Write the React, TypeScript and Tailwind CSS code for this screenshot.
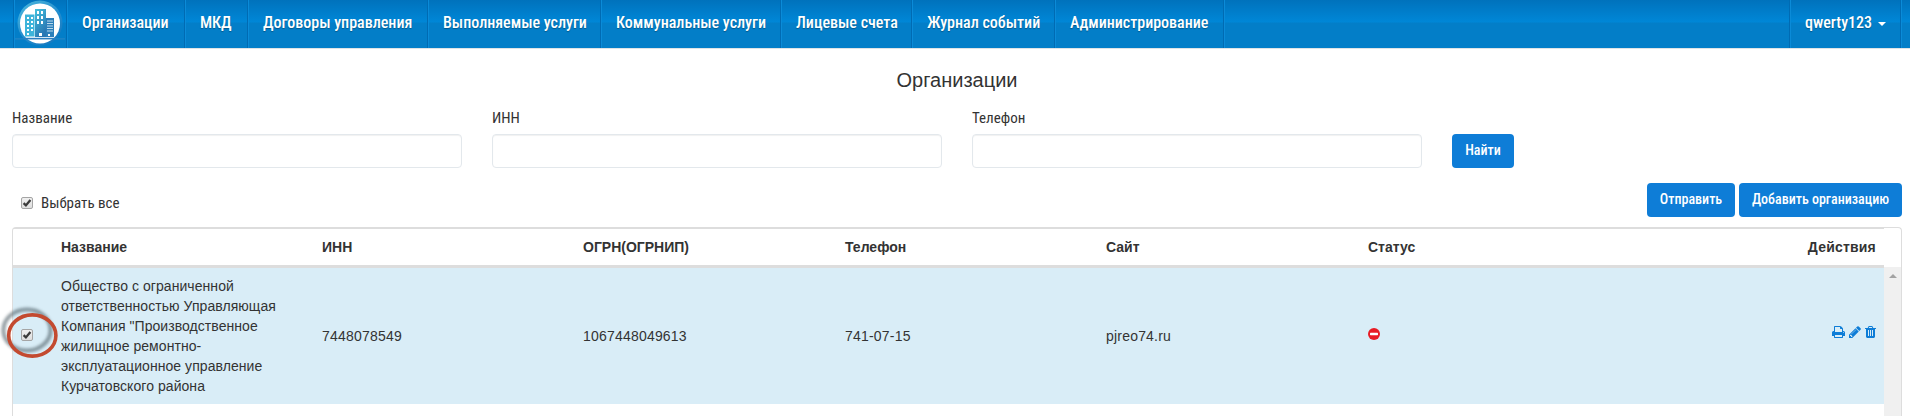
import React from "react";

const nav = [
  { label: "Организации", cls: "w-[118px]" },
  { label: "МКД", cls: "w-[63px]" },
  { label: "Договоры управления", cls: "w-[180px]" },
  { label: "Выполняемые услуги", cls: "w-[173px]" },
  { label: "Коммунальные услуги", cls: "w-[180px]" },
  { label: "Лицевые счета", cls: "w-[131px]" },
  { label: "Журнал событий", cls: "w-[143px]" },
  { label: "Администрирование", cls: "w-[169px]" },
];

const condensed = "font-['Roboto_Condensed',Roboto,sans-serif] [font-stretch:75%]";
const navItem =
  "flex h-full shrink-0 items-center whitespace-nowrap border-l border-r border-l-[#0b8bd8] border-r-[#006bb3] pl-[14px] pb-[2px]";

function Logo() {
  return (
    <svg width="50" height="48" viewBox="0 0 50 48" className="block">
      <defs>
        <linearGradient id="ring" x1="0" y1="0" x2="0.7" y2="1">
          <stop offset="0" stopColor="#5cc6e2" />
          <stop offset="0.6" stopColor="#2a90cf" />
          <stop offset="1" stopColor="#1a78bd" />
        </linearGradient>
        <linearGradient id="tower" x1="0" y1="0" x2="0.5" y2="1">
          <stop offset="0" stopColor="#45c2de" />
          <stop offset="1" stopColor="#2878b4" />
        </linearGradient>
      </defs>
      <circle cx="25" cy="23" r="22.5" fill="url(#ring)" opacity="0.85" />
      <circle cx="25" cy="23.5" r="20" fill="#fff" />
      <path d="M0 38.8 H50" stroke="#3c8ac4" strokeWidth="1.2" opacity="0.6" />
      <path d="M10 14.500h9.500v22h-9.500z" fill="#3db4da" />
      <path d="M20 9h11v28h-11z" fill="url(#tower)" />
      <path d="M31 18h8v19h-8z" fill="#2c7fba" />
      <path d="M12 17h2v2h-2zM16 17h2v2h-2zM12 21h2v2h-2zM16 21h2v2h-2zM12 25h2v2h-2zM16 25h2v2h-2zM12 29h2v2h-2zM16 29h2v2h-2zM12 33h2v2h-2zM22 11h2v3h-2zM26 11h2v3h-2zM22 16h2v3h-2zM26 16h2v3h-2zM22 21h2v3h-2zM26 21h2v3h-2zM24 33h3v3h-3zM33 34h2v2h-2z" fill="#fff" />
      <path d="M32 21h6M32 23.5h6M32 26h6M32 28.5h6M32 31h6" stroke="#c9e4f2" strokeWidth="0.9" />
      <path d="M9 38.500h32" stroke="#2a7fc0" strokeWidth="1.4" />
    </svg>
  );
}

function Check() {
  return (
    <span className="flex h-3 w-3 items-center justify-center rounded-[2px] border border-[#a5a5a5] bg-linear-to-b from-[#f0f0f0] to-[#dedede]">
      <svg width="10" height="10" viewBox="0 0 10 10">
        <path d="M1.6 5.2 L3.9 7.4 L8.4 2" fill="none" stroke="#3b3b3b" strokeWidth="2.3" />
      </svg>
    </span>
  );
}

function Button({ label, cls }: { label: string; cls: string }) {
  return (
    <button
      className={`flex h-[34px] shrink-0 items-center justify-center whitespace-nowrap rounded-[4px] bg-[#0e7dd7] pb-px text-[14px] font-medium text-white ${cls}`}
    >
      {label}
    </button>
  );
}

function Field({ label }: { label: string }) {
  return (
    <label className="flex w-[450px] flex-col text-[15px] leading-[22px]">
      <span>{label}</span>
      <input className="mt-[5px] h-[34px] w-full rounded-[4px] border border-[#e3e8ec] bg-white shadow-[inset_0_1px_1px_rgba(0,0,0,0.06)]" />
    </label>
  );
}

export default function App() {
  return (
    <div className={`flex h-[416px] w-[1910px] flex-col overflow-hidden bg-white text-[#333] ${condensed}`}>
      <nav className="flex h-[49px] shrink-0 border-b border-[#dfe3e6] bg-[linear-gradient(#0072bc_0px,#0087d7_22px,#037ec8_23px,#037ec8_48px)] text-[16px] font-medium text-white [text-shadow:0_1px_1px_rgba(0,0,0,0.3)]">
        <div className="h-full w-[14px] border-r border-[#006bb3]" />
        <div className="h-full w-[53px] border-l border-r border-l-[#0b8bd8] border-r-[#006bb3]">
          <Logo />
        </div>
        {nav.map((n) => (
          <div key={n.label} className={`${navItem} ${n.cls}`}>
            {n.label}
          </div>
        ))}
        <div className="h-full flex-1 border-l border-r border-l-[#0b8bd8] border-r-[#006bb3]" />
        <div className={`${navItem} w-[111px]`}>
          qwerty123
          <span className="ml-[6px] mt-[2px] h-0 w-0 border-x-4 border-t-4 border-x-transparent border-t-white" />
        </div>
        <div className="h-full w-[9px] border-l border-[#0b8bd8]" />
      </nav>

      <h1 className="mt-[19px] h-[24px] pl-[4px] text-center font-['Liberation_Sans',Arial,sans-serif] text-[20px] leading-[24px]">
        Организации
      </h1>

      <div className="mt-[15px] flex h-[61px] items-end gap-[30px] pl-3">
        <Field label="Название" />
        <Field label="ИНН" />
        <Field label="Телефон" />
        <Button label="Найти" cls="w-[62px]" />
      </div>

      <div className="mt-[15px] flex h-[34px] items-center justify-between pl-[21px] pr-[8px]">
        <div className="flex items-center gap-2 pt-[6px] text-[15px] leading-[20px]">
          <Check />
          <span>Выбрать все</span>
        </div>
        <div className="flex gap-1">
          <Button label="Отправить" cls="w-[88px]" />
          <Button label="Добавить организацию" cls="w-[163px]" />
        </div>
      </div>

      <section className="ml-3 mt-[10px] flex h-[189px] w-[1890px] shrink-0 flex-col rounded-t-[4px] border border-b-0 border-[#ddd] font-['Liberation_Sans',Arial,sans-serif] text-[14px] leading-[20px]">
        <header className="flex h-[40px] shrink-0">
          <div className="flex w-[1871px] items-center border-b-[3px] border-t border-[#ddd] pl-[48px] font-bold">
            <span className="w-[261px]">Название</span>
            <span className="w-[261px]">ИНН</span>
            <span className="w-[262px]">ОГРН(ОГРНИП)</span>
            <span className="w-[261px]">Телефон</span>
            <span className="w-[262px]">Сайт</span>
            <span className="w-[261px]">Статус</span>
            <span className="flex-1 pr-[8px] text-right tracking-[0.2px]">Действия</span>
          </div>
        </header>
        <div className="flex flex-1">
          <div className="w-[1871px]">
            <div className="flex h-[136px] items-center bg-[#d9edf7]">
              <div className="relative -top-px flex w-[48px] shrink-0 pl-[8px]">
                <Check />
                <svg
                  width="64"
                  height="64"
                  viewBox="0 0 64 64"
                  className="pointer-events-none absolute -left-[15px] -top-[29px]"
                >
                  <defs>
                    <filter id="soft" x="-20%" y="-20%" width="140%" height="140%">
                      <feGaussianBlur stdDeviation="1.5" />
                    </filter>
                  </defs>
                  <ellipse cx="29" cy="30" rx="23.600" ry="20.500" fill="none" stroke="#4a5a62" strokeWidth="4" opacity="0.6" filter="url(#soft)" />
                  <ellipse cx="34.3" cy="35.5" rx="23.600" ry="20.600" fill="none" stroke="#c34a30" strokeWidth="3.6" />
                </svg>
              </div>
              <div className="w-[261px] shrink-0 tracking-[0.06px]">
                Общество с ограниченной
                <br />
                ответственностью Управляющая
                <br />
                Компания "Производственное
                <br />
                жилищное ремонтно-
                <br />
                эксплуатационное управление
                <br />
                Курчатовского района
              </div>
              <span className="w-[261px] tracking-[0.2px]">7448078549</span>
              <span className="w-[262px] tracking-[0.2px]">1067448049613</span>
              <span className="w-[261px] tracking-[0.2px]">741-07-15</span>
              <span className="w-[262px] tracking-[0.2px]">pjreo74.ru</span>
              <span className="w-[261px] pb-[5px]">
                <svg width="12" height="12" viewBox="0 0 12 12">
                  <circle cx="6" cy="6" r="6" fill="#e81c24" />
                  <rect x="2" y="4.8" width="8" height="2.4" rx="0.6" fill="#fff" />
                </svg>
              </span>
              <span className="flex flex-1 items-center justify-end gap-[4px] pb-[9px] pr-[8px] text-[#0e7dd7]">
                <svg width="13" height="12" viewBox="0 0 1664 1536" fill="currentColor">
                  <path d="M384 1408h896v-256H384zm0-640h896V384h-160q-40 0-68-28t-28-68V128H384zm1152 64q0-26-19-45t-45-19-45 19-19 45 19 45 45 19 45-19 19-45m128 0v416q0 13-9.500 22.500t-22.500 9.500h-224v160q0 40-28 68t-68 28H352q-40 0-68-28t-28-68v-160H32q-13 0-22.500-9.500T0 1248V832q0-79 56.500-135.500T192 640h64V96q0-40 28-68t68-28h672q40 0 88 20t76 48l152 152q28 28 48 76t20 88v256h64q79 0 135.500 56.500T1664 832" />
                </svg>
                <svg width="12" height="12" viewBox="0 0 1536 1536" fill="currentColor">
                  <path d="M363 1408l91-91-235-235-91 91v107h128v128zm523-928q0-22-22-22-10 0-17 7l-542 542q-7 7-7 17 0 22 22 22 10 0 17-7l542-542q7-7 7-17m-54-192l416 416-832 832H0v-416zm683 96q0 53-37 90l-166 166-416-416 166-165q36-38 90-38 53 0 91 38l235 234q37 39 37 91" />
                </svg>
                <svg width="11" height="12" viewBox="0 0 1408 1536" fill="currentColor">
                  <path d="M512 1248V544q0-14-9-23t-23-9h-64q-14 0-23 9t-9 23v704q0 14 9 23t23 9h64q14 0 23-9t9-23m256 0V544q0-14-9-23t-23-9h-64q-14 0-23 9t-9 23v704q0 14 9 23t23 9h64q14 0 23-9t9-23m256 0V544q0-14-9-23t-23-9h-64q-14 0-23 9t-9 23v704q0 14 9 23t23 9h64q14 0 23-9t9-23M480 256h448l-48-117q-7-9-17-11H546q-10 2-17 11zm928 32v64q0 14-9 23t-23 9h-96v948q0 83-47 143.500t-113 60.500H288q-66 0-113-58.500T128 1336V384H32q-14 0-23-9t-9-23v-64q0-14 9-23t23-9h309l70-167q15-37 54-63t79-26h320q40 0 79 26t54 63l70 167h309q14 0 23 9t9 23" />
                </svg>
              </span>
            </div>
          </div>
          <div className="-mt-px flex w-[17px] justify-center bg-[#f0f0f0] pt-[7px]">
            <span className="h-0 w-0 border-x-4 border-b-4 border-x-transparent border-b-[#a3a3a3]" />
          </div>
        </div>
      </section>
    </div>
  );
}
